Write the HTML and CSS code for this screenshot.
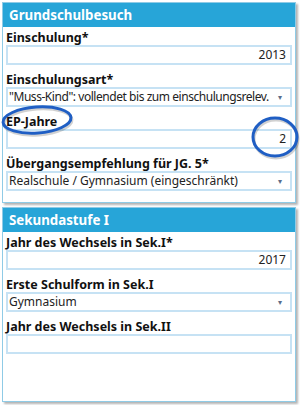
FILE: index.html
```html
<!DOCTYPE html>
<html lang="de">
<head>
    <meta charset="UTF-8">
    <meta name="viewport" content="width=device-width, initial-scale=1.0">
    <title>Schullaufbahn</title>
    <link rel="stylesheet" href="styles.css">
</head>
<body>
    <div class="panel first">
        <div class="panel-head">Grundschulbesuch</div>
        <div class="panel-body">
            <label>Einschulung*</label>
            <div class="box num">2013</div>
            <label>Einschulungsart*</label>
            <div class="box select"><span class="val tight">"Muss-Kind": vollendet bis zum einschulungsrelev.</span><span class="arrow">&#9662;</span></div>
            <label>EP-Jahre</label>
            <div class="box num">2</div>
            <label>Übergangsempfehlung für JG. 5*</label>
            <div class="box select"><span class="val">Realschule / Gymnasium (eingeschränkt)</span><span class="arrow">&#9662;</span></div>
        </div>
    </div>
    <div class="panel second">
        <div class="panel-head">Sekundastufe I</div>
        <div class="panel-body">
            <label>Jahr des Wechsels in Sek.I*</label>
            <div class="box num">2017</div>
            <label>Erste Schulform in Sek.I</label>
            <div class="box select"><span class="val">Gymnasium</span><span class="arrow">&#9662;</span></div>
            <label>Jahr des Wechsels in Sek.II</label>
            <div class="box num"></div>
        </div>
    </div>
    <svg class="marks" width="300" height="405" viewBox="0 0 300 405">
        <ellipse class="mark-shadow" cx="38" cy="122" rx="34" ry="13" transform="rotate(-4 38 122)"/>
        <ellipse class="mark" cx="37" cy="120" rx="34" ry="13" transform="rotate(-4 37 120)"/>
        <ellipse class="mark-shadow" cx="276" cy="139" rx="22" ry="19"/>
        <ellipse class="mark" cx="275" cy="137" rx="22" ry="19"/>
    </svg>
</body>
</html>
```
FILE: styles.css
```css
body {
    margin: 0;
    width: 300px;
    height: 405px;
    font-family: "Noto Sans", "Open Sans", sans-serif;
    font-size: 12px;
    color: #222;
    background: #fff;
    position: relative;
    overflow: hidden;
}
.panel {
    margin: 2px 4px 0 2px;
    border: 1px solid #8fcbe6;
    background: #fff;
    box-shadow: 2px 2px 2px #b5b5b5;
}
.first {
    height: 199px;
}
.second {
    margin-top: 4px;
    height: 193px;
}
.panel-head {
    background: #27a5d8;
    color: #fff;
    font-weight: bold;
    font-size: 13.3px;
    height: 24px;
    line-height: 24px;
    padding-left: 6px;
}
.panel-body {
    padding: 3px 3px 0 3px;
}
label {
    display: block;
    font-weight: bold;
    font-size: 12.5px;
    color: #111;
    line-height: 15px;
    height: 15px;
}
.box {
    height: 16px;
    border: 2px solid #c6e2f4;
    margin-bottom: 7px;
    padding: 0 4px;
    line-height: 16px;
    white-space: nowrap;
    overflow: hidden;
}
.num {
    text-align: right;
}
.select {
    display: flex;
    padding-left: 1px;
}
.val {
    flex: 1;
    overflow: hidden;
}
.tight {
    letter-spacing: -0.45px;
}
.arrow {
    color: #5a6d8a;
    font-size: 8px;
    width: 12px;
    text-align: center;
}
.marks {
    position: absolute;
    left: 0;
    top: 0;
    pointer-events: none;
}
.mark {
    fill: none;
    stroke: #1f5ec4;
    stroke-width: 3;
}
.mark-shadow {
    fill: none;
    stroke: rgba(0, 0, 0, 0.18);
    stroke-width: 3;
}
```
